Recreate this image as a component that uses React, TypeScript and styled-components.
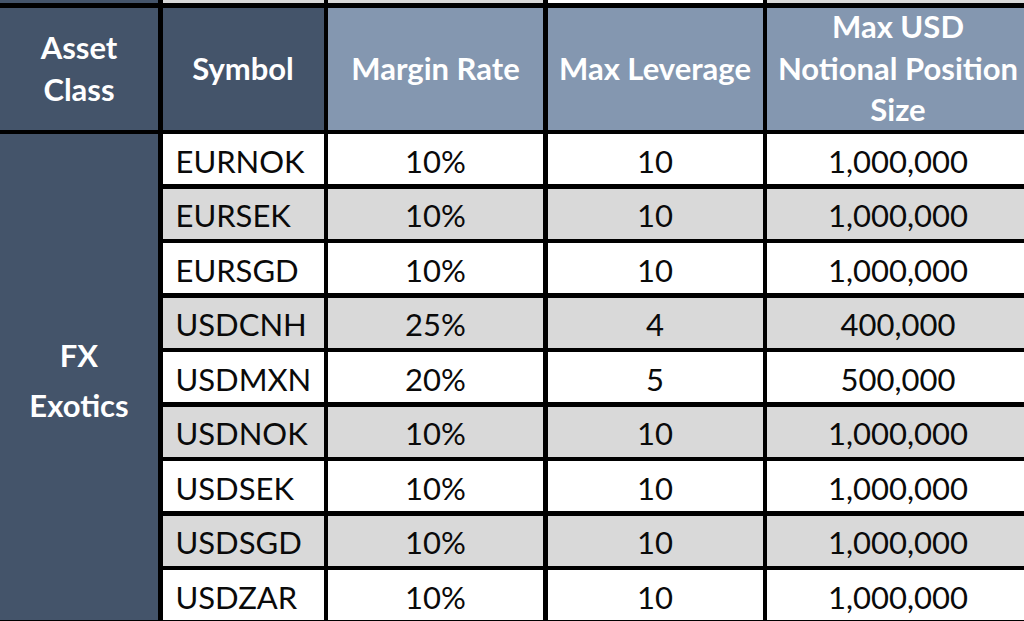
import React from "react"
import styled, { createGlobalStyle } from "styled-components"

const GlobalStyle = createGlobalStyle`
html, body {
margin: 0;
padding: 0;
background: #000;
overflow: hidden;
}
#root {
width: 1024px;
height: 621px;
overflow: hidden;
}
`

const Table = styled.div`
display: grid;
grid-template-columns: 158px 161px 215px 215px 262px;
grid-template-rows: 3px 122px repeat(9, 50px);
gap: 4.5px;
background: #000;
width: max-content;
`

const TopStrip = styled.div<{ $bg: string }>`
background: ${(p) => p.$bg};
`

const HeaderCell = styled.div<{ $tone: "dark" | "light" }>`
display: flex;
align-items: center;
justify-content: center;
text-align: center;
background: ${(p) => (p.$tone === "dark" ? "#44546a" : "#8497b0")};
color: #fff;
font-family: Lato, "Liberation Sans", sans-serif;
font-weight: 700;
font-size: 31px;
line-height: 41.5px;
white-space: nowrap;
`

const AssetCell = styled.div`
grid-row: 3 / span 9;
grid-column: 1;
display: flex;
align-items: center;
justify-content: center;
text-align: center;
background: #44546a;
color: #fff;
font-family: Lato, "Liberation Sans", sans-serif;
font-weight: 700;
font-size: 31px;
line-height: 50px;
padding-top: 6px;
`

const Cell = styled.div<{ $shade: boolean; $align?: "left" | "center" }>`
display: flex;
align-items: center;
justify-content: ${(p) => (p.$align === "left" ? "flex-start" : "center")};
padding: 3px 0 0 ${(p) => (p.$align === "left" ? "13px" : "0")};
background: ${(p) => (p.$shade ? "#d9d9d9" : "#fff")};
color: #0a0a0a;
font-family: Lato, "Liberation Sans", sans-serif;
font-size: 31px;
white-space: nowrap;
`

type Row = { symbol: string; margin: string; leverage: string; size: string }

const rows: Row[] = [
    { symbol: "EURNOK", margin: "10%", leverage: "10", size: "1,000,000" },
    { symbol: "EURSEK", margin: "10%", leverage: "10", size: "1,000,000" },
    { symbol: "EURSGD", margin: "10%", leverage: "10", size: "1,000,000" },
    { symbol: "USDCNH", margin: "25%", leverage: "4", size: "400,000" },
    { symbol: "USDMXN", margin: "20%", leverage: "5", size: "500,000" },
    { symbol: "USDNOK", margin: "10%", leverage: "10", size: "1,000,000" },
    { symbol: "USDSEK", margin: "10%", leverage: "10", size: "1,000,000" },
    { symbol: "USDSGD", margin: "10%", leverage: "10", size: "1,000,000" },
    { symbol: "USDZAR", margin: "10%", leverage: "10", size: "1,000,000" },
]

const App: React.FC = () => {
    return (
        <>
            <GlobalStyle />
            <Table>
                {/* tail of the row above, cut off by the screenshot */}
                <TopStrip $bg="#44546a" />
                <TopStrip $bg="#d9d9d9" />
                <TopStrip $bg="#d9d9d9" />
                <TopStrip $bg="#fff" />
                <TopStrip $bg="#d9d9d9" />

                <HeaderCell $tone="dark">Asset<br />Class</HeaderCell>
                <HeaderCell $tone="dark">Symbol</HeaderCell>
                <HeaderCell $tone="light">Margin Rate</HeaderCell>
                <HeaderCell $tone="light">Max Leverage</HeaderCell>
                <HeaderCell $tone="light">Max USD<br />Notional Position<br />Size</HeaderCell>

                <AssetCell>FX<br />Exotics</AssetCell>

                {rows.map((r, i) => {
                    const shade = i % 2 === 1
                    return (
                        <React.Fragment key={r.symbol}>
                            <Cell $shade={shade} $align="left">{r.symbol}</Cell>
                            <Cell $shade={shade}>{r.margin}</Cell>
                            <Cell $shade={shade}>{r.leverage}</Cell>
                            <Cell $shade={shade}>{r.size}</Cell>
                        </React.Fragment>
                    )
                })}
            </Table>
        </>
    )
}

export default App
